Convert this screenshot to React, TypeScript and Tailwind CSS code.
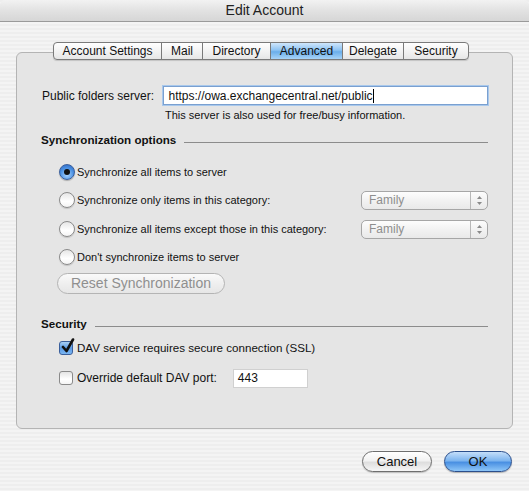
import React from "react";

const font = { fontFamily: '"Liberation Sans", Arial, sans-serif' };

function Radio({ checked }: { checked?: boolean }) {
  return checked ? (
    <div className="shrink-0 w-[16px] h-[16px] rounded-full border border-[#3a5f9c] bg-[radial-gradient(circle_at_50%_70%,#a9d4ff_0%,#4a90e2_55%,#2a64c0_100%)] flex items-center justify-center shadow-[0_1px_1px_rgba(0,0,0,0.25)]">
      <div className="w-[6px] h-[6px] rounded-full bg-[#111]" />
    </div>
  ) : (
    <div className="shrink-0 w-[16px] h-[16px] rounded-full border border-[#8a8a8a] bg-[linear-gradient(180deg,#e6e6e6_0%,#ffffff_60%,#f4f4f4_100%)] shadow-[0_1px_1px_rgba(0,0,0,0.15)]" />
  );
}

function Checkbox({ checked }: { checked?: boolean }) {
  return checked ? (
    <div className="shrink-0 relative w-[14px] h-[14px] rounded-[3px] border border-[#3a5f9c] bg-[linear-gradient(180deg,#a9d0f5_0%,#5a9ae6_50%,#7bb6f2_100%)]">
      <svg className="absolute left-[1px] top-[-4px]" width="14" height="16" viewBox="0 0 14 16">
        <path d="M2 9 L5.5 13 L12 1.5" fill="none" stroke="#111" strokeWidth="2.6" strokeLinecap="round" strokeLinejoin="round" />
      </svg>
    </div>
  ) : (
    <div className="shrink-0 w-[14px] h-[14px] rounded-[3px] border border-[#8a8a8a] bg-[linear-gradient(180deg,#e4e4e4_0%,#ffffff_60%,#f4f4f4_100%)]" />
  );
}

function Popup() {
  return (
    <div className="ml-auto w-[127px] h-[19px] rounded-[5px] border border-[#a6a6a6] bg-[linear-gradient(180deg,#fdfdfd_0%,#f2f2f2_50%,#e9e9e9_100%)] flex items-stretch text-[12px] text-[#8e8e8e]">
      <div className="flex-1 flex items-center pl-[7px]">Family</div>
      <div className="w-[17px] border-l border-[#b8b8b8] flex items-center justify-center">
        <svg width="7" height="11" viewBox="0 0 7 11">
          <path d="M3.5 1 L6 4 L1 4 Z" fill="#8a8a8a" />
          <path d="M3.5 10 L6 7 L1 7 Z" fill="#8a8a8a" />
        </svg>
      </div>
    </div>
  );
}

const tabs = [
  { label: "Account Settings", w: 108 },
  { label: "Mail", w: 41 },
  { label: "Directory", w: 68 },
  { label: "Advanced", w: 72, active: true },
  { label: "Delegate", w: 61 },
  { label: "Security", w: 65 },
];

export default function App() {
  return (
    <div
      className="w-[529px] h-[491px] overflow-hidden flex flex-col bg-[repeating-linear-gradient(180deg,#eeeeee_0px,#eeeeee_2px,#f4f4f4_2px,#f4f4f4_4px)] text-[#111]"
      style={font}
    >
      {/* title bar */}
      <div className="h-[22px] shrink-0 rounded-t-[5px] border-b border-[#9a9a9a] bg-[linear-gradient(180deg,#f2f2f2_0%,#e2e2e2_50%,#d6d6d6_100%)] flex items-center justify-center text-[14px] text-[#222]">
        Edit Account
      </div>

      {/* tabs */}
      <div className="mt-[20px] pl-[53px] flex relative z-10">
        <div className="flex h-[18px] rounded-[4px] border border-[#7a7a7a] overflow-hidden bg-[linear-gradient(180deg,#ffffff_0%,#f3f3f3_50%,#e6e6e6_100%)] shadow-[0_1px_1px_rgba(0,0,0,0.15)]">
          {tabs.map((t, i) => (
            <div
              key={t.label}
              className={
                "h-full flex items-center justify-center text-[12px] " +
                (i > 0 ? "border-l border-[#7a7a7a] " : "") +
                (t.active
                  ? "bg-[linear-gradient(180deg,#cfe6fb_0%,#8cc2f2_45%,#6aaeea_55%,#a8d4f8_100%)] text-[#111]"
                  : "")
              }
              style={{ width: t.w - (i === 0 ? 1 : 0) }}
            >
              {t.label}
            </div>
          ))}
        </div>
      </div>

      {/* panel */}
      <div className="mx-[16px] -mt-[8px] h-[377px] rounded-[6px] border border-[#b4b4b4] bg-[#e5e5e5] px-[24px] pt-[33px] text-[12px]">
        <div className="flex items-center h-[19px]">
          <div className="w-[123px] pl-[1px]">Public folders server:</div>
          <div className="w-[326px] h-[19px] border border-[#7aa0d0] shadow-[0_0_0_1px_#a8c8ec] bg-white flex items-center pl-[4px]">
            https://owa.exchangecentral.net/public
            <span className="inline-block w-[1px] h-[14px] bg-black" />
          </div>
        </div>
        <div className="mt-[2px] h-[16px] flex items-center pl-[124px] text-[11px]">
          This server is also used for free/busy information.
        </div>

        <div className="mt-[9px] h-[16px] flex items-center gap-[8px] text-[11.6px]">
          <div className="font-bold">Synchronization options</div>
          <div className="flex-1 h-[1px] bg-[#8c8c8c] mt-[4px]" />
        </div>

        <div className="mt-[14px] h-[20px] flex items-center pl-[18px] gap-[2px] text-[11px]">
          <Radio checked />
          <span>Synchronize all items to server</span>
        </div>
        <div className="mt-[8px] h-[20px] flex items-center pl-[18px] gap-[2px] text-[11px]">
          <Radio />
          <span>Synchronize only items in this category:</span>
          <Popup />
        </div>
        <div className="mt-[9px] h-[20px] flex items-center pl-[18px] gap-[2px] text-[11px]">
          <Radio />
          <span>Synchronize all items except those in this category:</span>
          <Popup />
        </div>
        <div className="mt-[8px] h-[20px] flex items-center pl-[18px] gap-[2px] text-[11px]">
          <Radio />
          <span>Don't synchronize items to server</span>
        </div>
        <div className="mt-[6px] pl-[16px] flex">
          <div className="w-[168px] h-[21px] rounded-full border border-[#b4b4b4] bg-[linear-gradient(180deg,#fafafa_0%,#efefef_50%,#e6e6e6_100%)] flex items-center justify-center text-[14px] text-[#8f8f8f]">
            Reset Synchronization
          </div>
        </div>

        <div className="mt-[22px] h-[16px] flex items-center gap-[8px] text-[11.6px]">
          <div className="font-bold">Security</div>
          <div className="flex-1 h-[1px] bg-[#8c8c8c] mt-[4px]" />
        </div>
        <div className="mt-[6px] h-[20px] flex items-center pl-[18px] gap-[4px] text-[11.6px]">
          <Checkbox checked />
          <span>DAV service requires secure connection (SSL)</span>
        </div>
        <div className="mt-[10px] h-[20px] flex items-center pl-[18px] gap-[4px]">
          <Checkbox />
          <span>Override default DAV port:</span>
          <div className="ml-[12px] w-[75px] h-[19px] bg-white border border-[#d0d0d0] flex items-center pl-[4px]">
            443
          </div>
        </div>
      </div>

      {/* buttons */}
      <div className="mt-[22px] flex justify-end pr-[17px] gap-[12px]">
        <div className="w-[70px] h-[21px] rounded-full border border-[#6e6e6e] bg-[linear-gradient(180deg,#ffffff_0%,#f2f2f2_45%,#dedede_55%,#f6f6f6_100%)] flex items-center justify-center text-[13px] shadow-[0_1px_1px_rgba(0,0,0,0.2)]">
          Cancel
        </div>
        <div className="w-[68px] h-[21px] rounded-full border border-[#2b4f8c] bg-[linear-gradient(180deg,#c4defa_0%,#7eb5ef_45%,#4a90e2_55%,#8ec6f8_100%)] flex items-center justify-center text-[13px] shadow-[0_1px_1px_rgba(0,0,0,0.25)]">
          OK
        </div>
      </div>
    </div>
  );
}
